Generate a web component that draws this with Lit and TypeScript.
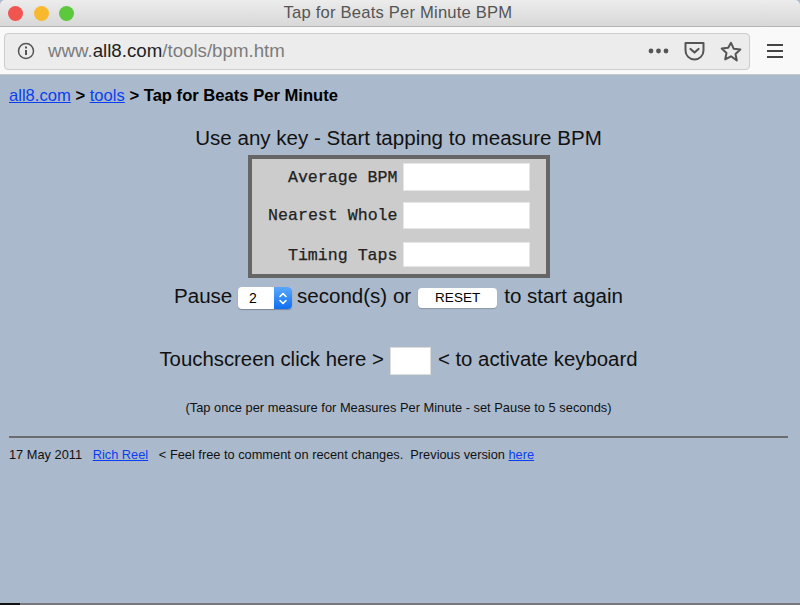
import { LitElement, html, css } from "lit";
import { customElement } from "lit/decorators.js";

@customElement("app-root")
export class AppRoot extends LitElement {
  static styles = css`
    :host { display: flex; flex-direction: column; height: 605px; width: 800px; overflow: hidden; font-family: "Liberation Sans", Arial, sans-serif; color: #111; background: #aab9cc; }
    .title { flex: none; box-sizing: border-box; display: grid; grid-template-columns: 1fr auto 1fr; align-items: center; background: linear-gradient(#ececec, #d8d8d8); border-bottom: 1px solid #b5b5b5; height: 27px; border-radius: 5px 5px 0 0; }
    .lights { display: flex; gap: 10.6px; padding-left: 8px; }
    .light { width: 15px; height: 15px; border-radius: 50%; }
    .r { background: #f0554f; } .y { background: #f9b92e; } .g { background: #5cc83d; }
    .wintitle { font-size: 16.6px; color: #555; letter-spacing: .2px; margin-right: 4px; }
    .toolbar { flex: none; height: 48px; box-sizing: border-box; background: #f9f9f9; border-bottom: 1px solid #c9c9c9; padding: 5px 17px 4px 4px; display: flex; align-items: center; gap: 17px; }
    .url { flex: 1; height: 37px; box-sizing: border-box; border: 1px solid #ccc; border-radius: 4px; background: #ececec; display: flex; align-items: center; padding: 0 7px 0 12px; }
    .url svg, .toolbar svg { display: block; flex: none; }
    .addr { margin-left: 13px; flex: 1; font-size: 18.7px; color: #7c7c7c; }
    .addr b { font-weight: normal; color: #222; }
    .acts { display: flex; align-items: center; gap: 15px; }
    .page { flex: 1; padding: 11px 12px 0 9px; position: relative; }
    .crumb { font-size: 16.6px; line-height: 19px; color: #000; }
    .crumb strong { font-weight: bold; }
    a { color: #0a3ff0; text-decoration: underline; }
    .center { display: flex; flex-direction: column; align-items: center; }
    .head { font-size: 20.55px; line-height: 24px; margin-top: 21px; height: 24px; margin-bottom: 5px; }
    .box { width: 302px; height: 123px; box-sizing: border-box; border: 4px solid #666; background: #ccc; display: grid; grid-template-columns: 1fr 127px; grid-template-rows: 28px 27px 27px; row-gap: 11px; column-gap: 5px; padding: 4px 16px 0 0; align-content: start; }
    .lbl { font-family: "Liberation Mono", "Courier New", monospace; font-size: 16.6px; text-align: right; align-self: center; color: #222; -webkit-text-stroke: .25px #222; }
    .third { margin-top: 2px; }
    .lbl.third { margin-top: 4px; }
    .fld { background: #fff; border: 1px solid #e6e6e6; box-sizing: border-box; }
    .row { display: flex; align-items: center; font-size: 20.55px; line-height: 24px; margin-top: 6px; height: 24px; white-space: pre; }
    .sel { display: inline-flex; width: 54px; height: 22px; margin: 4px 5px 0 0; background: #fff; border-radius: 4px; overflow: hidden; box-shadow: 0 1px 1px #7d8794; font-size: 14px; }
    .selv { flex: 1; padding-left: 11px; line-height: 22px; color: #000; }
    .arr { width: 18px; background: linear-gradient(#5aa6fb, #0f6ff0); display: flex; align-items: center; justify-content: center; }
    .reset { width: 79px; height: 20px; margin: 4px 7px 0; background: #fff; border-radius: 4px; box-shadow: 0 1px 1px #8c96a3; font-size: 13.5px; letter-spacing: .1px; line-height: 20px; text-align: center; color: #000; }
    .touch { margin-top: 37px; height: 28px; font-size: 20.35px; }
    .tbox { width: 41px; height: 28px; box-sizing: border-box; background: #fff; border: 1px solid #dcdcdc; margin: 4px 7px 0 6px; }
    .note { font-size: 12.87px; line-height: 15px; margin-top: 27px; }
    hr { height: 2px; border: 0; margin: 21px 0 0 0; background: #6c6c70; }
    .foot { font-size: 12.8px; line-height: 15px; margin-top: 9px; white-space: pre; }
    .strip { position: absolute; left: 0; right: 0; bottom: 0; height: 2px; background: #77787c; }
    .strip i { display: block; width: 20px; height: 2px; background: #111; }
  `;
  render() {
    return html`
      <div class="title">
        <div class="lights"><span class="light r"></span><span class="light y"></span><span class="light g"></span></div>
        <div class="wintitle">Tap for Beats Per Minute BPM</div>
        <div></div>
      </div>
      <div class="toolbar">
        <div class="url">
          <svg width="18" height="18" viewBox="0 0 18 18" fill="none" stroke="#555" stroke-width="1.5"><circle cx="9" cy="9" r="7.5"/><path d="M9 8v5" stroke-width="2"/><path d="M9 4.4v2" stroke-width="2"/></svg>
          <div class="addr">www.<b>all8.com</b>/tools/bpm.htm</div>
          <div class="acts">
            <svg width="21" height="6" viewBox="0 0 21 6" fill="#555"><circle cx="3" cy="3" r="2.4"/><circle cx="10.5" cy="3" r="2.4"/><circle cx="18" cy="3" r="2.4"/></svg>
            <svg width="21" height="20" viewBox="0 0 21 20" fill="none" stroke="#555" stroke-width="2"><path d="M1.5 2h18v7.5a9 9 0 0 1-18 0z" stroke-linejoin="round"/><path d="M6.5 8l4 3.5 4-3.5" stroke-width="2.2" stroke-linecap="round" stroke-linejoin="round"/></svg>
            <svg width="22" height="21" viewBox="0 0 22 21" fill="none" stroke="#555" stroke-width="2" stroke-linejoin="round"><path d="M11 1.8l2.8 6 6.5.8-4.8 4.4 1.3 6.4L11 15.3l-5.8 3.1 1.3-6.4-4.8-4.4 6.5-.8z"/></svg>
          </div>
        </div>
        <svg width="16" height="16" viewBox="0 0 16 16" stroke="#444" stroke-width="2.2"><path d="M0 2h16M0 8h16M0 14h16"/></svg>
      </div>
      <div class="page">
        <div class="crumb"><a href="#">all8.com</a> <strong>&gt;</strong> <a href="#">tools</a> <strong>&gt; Tap for Beats Per Minute</strong></div>
        <div class="center">
          <div class="head">Use any key - Start tapping to measure BPM</div>
          <div class="box">
            <div class="lbl">Average BPM</div><div class="fld"></div>
            <div class="lbl">Nearest Whole</div><div class="fld"></div>
            <div class="lbl third">Timing Taps</div><div class="fld third"></div>
          </div>
          <div class="row">Pause <span class="sel"><span class="selv">2</span><span class="arr"><svg width="10" height="15" viewBox="0 0 10 15" fill="none" stroke="#fff" stroke-width="1.6" stroke-linecap="round" stroke-linejoin="round"><path d="M2 5.5L5 2.5l3 3M2 9.5l3 3 3-3"/></svg></span></span>second(s) or<span class="reset">RESET</span>to start again</div>
          <div class="row touch">Touchscreen click here &gt;<span class="tbox"></span>&lt; to activate keyboard</div>
          <div class="note">(Tap once per measure for Measures Per Minute - set Pause to 5 seconds)</div>
        </div>
        <hr />
        <div class="foot">17 May 2011   <a href="#">Rich Reel</a>   &lt; Feel free to comment on recent changes.  Previous version <a href="#">here</a></div>
        <div class="strip"><i></i></div>
      </div>
    `;
  }
}
